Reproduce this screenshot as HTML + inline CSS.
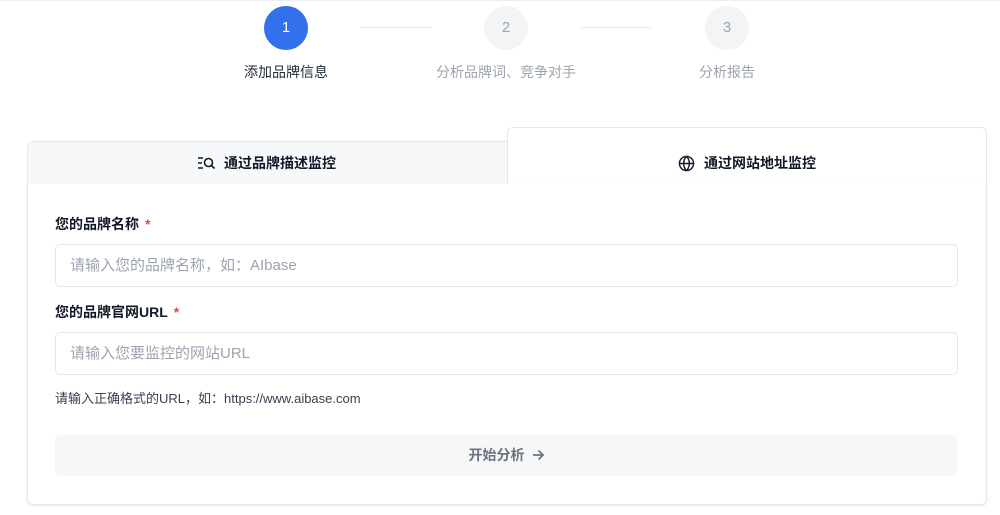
<!DOCTYPE html>
<html><head><meta charset="utf-8"><style>
*{box-sizing:border-box;margin:0;padding:0}
body{width:1000px;height:515px;background:#fff;font-family:"Liberation Sans","Noto Sans CJK SC",sans-serif;position:relative;overflow:hidden}
.c{position:absolute;width:44px;height:44px;border-radius:50%;top:6px;font-size:15px;text-align:center;line-height:44px}
.l{position:absolute;top:27px;height:1px;background:#e5e7eb;width:70px}
.s{position:absolute;top:62px;font-size:14px;text-align:center;width:200px}
.card{position:absolute;left:27px;top:184px;width:960px;height:321px;border:1px solid #e5e7eb;border-top:none;border-radius:0 0 6px 6px;box-shadow:0 1px 3px rgba(0,0,0,.08);background:#fff}
.lab{position:absolute;left:55px;font-size:14px;font-weight:bold;color:#111827}
.lab span{color:#ef4444;margin-left:6px}
.in{position:absolute;left:55px;width:903px;height:43px;border:1px solid #e5e7eb;border-radius:5px;font-size:15px;color:#9ca3af;padding-left:14px;line-height:41px}
</style></head><body>
<div style="position:absolute;left:0;top:0;width:1000px;height:1px;background:#eee"></div>
<div class="c" style="left:264px;background:#3370eb;color:#fff">1</div>
<div class="l" style="left:361px"></div>
<div class="c" style="left:484px;background:#f3f4f6;color:#9ca3af">2</div>
<div class="l" style="left:581px"></div>
<div class="c" style="left:705px;background:#f3f4f6;color:#9ca3af">3</div>
<div class="s" style="left:186px;color:#1f2937">添加品牌信息</div>
<div class="s" style="left:406px;color:#9ca3af">分析品牌词、竞争对手</div>
<div class="s" style="left:627px;color:#9ca3af">分析报告</div>

<div style="position:absolute;left:27px;top:141px;width:481px;height:44px;background:#f7f8fa;border:1px solid #e5e7eb;border-radius:6px 0 0 0;font-size:14px;font-weight:bold;color:#111827;line-height:42px;padding-left:196px">
<svg width="18" height="14" viewBox="0 0 18 14" style="position:absolute;left:169px;top:14px" fill="none" stroke="#111827" stroke-width="1.6"><path d="M1 2h5M1 7h4M1 12h5"/><circle cx="11.5" cy="6.5" r="4"/><path d="M14.5 9.5l3 3"/></svg>通过品牌描述监控</div>
<div style="position:absolute;left:507px;top:127px;width:480px;height:58px;background:#fff;border:1px solid #e5e7eb;border-bottom:none;border-radius:6px 6px 0 0;font-size:14px;font-weight:bold;color:#111827;line-height:70px;padding-left:196px">
<svg width="17" height="17" viewBox="0 0 18 18" style="position:absolute;left:170px;top:27px" fill="none" stroke="#111827" stroke-width="1.5"><circle cx="9" cy="9" r="7.5"/><path d="M1.5 9h15M9 1.5c-4 4-4 11 0 15M9 1.5c4 4 4 11 0 15"/></svg>通过网站地址监控</div>
<div class="card"></div>
<div class="lab" style="top:214px">您的品牌名称<span>*</span></div>
<div class="in" style="top:244px">请输入您的品牌名称，如：AIbase</div>
<div class="lab" style="top:302px">您的品牌官网URL<span>*</span></div>
<div class="in" style="top:332px">请输入您要监控的网站URL</div>
<div style="position:absolute;left:55px;top:388px;font-size:13px;color:#374151">请输入正确格式的URL，如：https://www.aibase.com</div>
<div style="position:absolute;left:55px;top:435px;width:903px;height:41px;background:#f6f7f9;border-radius:5px;text-align:center;line-height:41px;font-size:14px;font-weight:bold;color:#6b7280">开始分析 <svg width="12" height="12" viewBox="0 0 12 12" style="vertical-align:-1px;margin-left:4px" fill="none" stroke="#6b7280" stroke-width="1.8"><path d="M1 6h10M6.5 1.5L11 6l-4.5 4.5"/></svg></div>
</body></html>
